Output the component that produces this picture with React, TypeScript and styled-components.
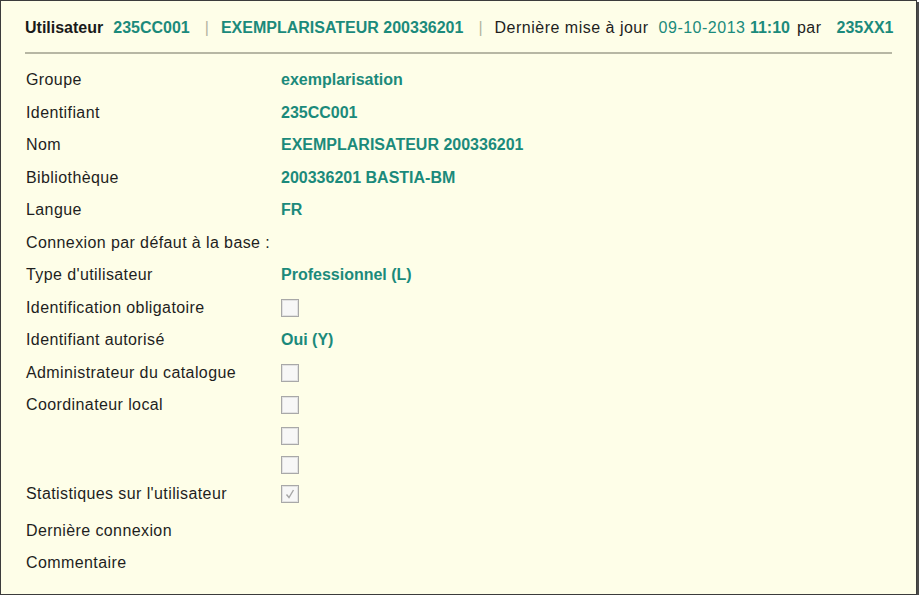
import React from "react";
import styled, { createGlobalStyle } from "styled-components";

const Global = createGlobalStyle`
  html, body { margin: 0; padding: 0; background: #ffffff; }
  body { font-family: "Liberation Sans", Arial, sans-serif; }
`;

const Frame = styled.div`
  box-sizing: border-box;
  width: 917px;
  height: 595px;
  background: #fefee8;
  border: 1px solid #3c3c3c;
  box-shadow: 2px 2px 0 #4a4a4a;
  padding: 0 24px 0 24px;
  color: #1e1e1e;
  font-size: 16px;
`;

const Header = styled.div`
  display: flex;
  align-items: center;
  height: 53px;
  padding-top: 3px;
  box-sizing: border-box;
  border-bottom: 2px solid #b7b7a4;
  white-space: nowrap;
`;

const Strong = styled.span`
  font-weight: bold;
  color: #1a1a1a;
  margin-right: 10px;
`;

const Value = styled.span<{ $gap?: number; $weight?: string }>`
  color: #1b8a7b;
  font-weight: ${(p) => p.$weight ?? "bold"};
  letter-spacing: ${(p) => (p.$weight === "normal" ? "0.5px" : "0")};
  margin-right: ${(p) => p.$gap ?? 0}px;
`;

const Sep = styled.span`
  color: #b4b4a0;
  margin: 0 12px 0 15px;
`;

const Plain = styled.span<{ $gap?: number }>`
  color: #1e1e1e;
  letter-spacing: 0.5px;
  margin-right: ${(p) => p.$gap ?? 10}px;
`;

const List = styled.div`
  display: flex;
  flex-direction: column;
  padding-top: 10px;
  padding-left: 1px;
`;

const Row = styled.div<{ $h?: number; $mt?: number }>`
  display: grid;
  grid-template-columns: 255px 1fr;
  align-items: center;
  height: ${(p) => p.$h ?? 32.5}px;
  margin-top: ${(p) => p.$mt ?? 0}px;
`;

const Label = styled.span`
  color: #1e1e1e;
  letter-spacing: 0.4px;
  white-space: nowrap;
`;

const Field = styled.span`
  color: #1b8a7b;
  font-weight: bold;
`;

const Box = styled.span`
  display: block;
  box-sizing: border-box;
  width: 18px;
  height: 18px;
  border: 1px solid #a8a8a8;
  background: #f7f7f7;
  box-shadow: inset 0 0 0 1px #e2e2e2;
  position: relative;
`;

const Check = styled.svg`
  position: absolute;
  left: 3px;
  top: 3px;
`;

const CheckBox: React.FC<{ checked?: boolean }> = ({ checked }) => (
  <Box>
    {checked && (
      <Check width="10" height="10" viewBox="0 0 10 10">
        <path d="M1.5 5.5 L4 8.5 L8.5 1" fill="none" stroke="#a6a6a6" strokeWidth="1.4" />
      </Check>
    )}
  </Box>
);

export default function App() {
  return (
    <>
      <Global />
      <Frame>
        <Header>
          <Strong>Utilisateur</Strong>
          <Value>235CC001</Value>
          <Sep>|</Sep>
          <Value>EXEMPLARISATEUR 200336201</Value>
          <Sep>|</Sep>
          <Plain>Dernière mise à jour</Plain>
          <Value $weight="normal">09-10-2013</Value>
          <Value $gap={7}>&nbsp;11:10</Value>
          <Plain $gap={15}>par</Plain>
          <Value>235XX1</Value>
        </Header>
        <List>
          <Row><Label>Groupe</Label><Field>exemplarisation</Field></Row>
          <Row><Label>Identifiant</Label><Field>235CC001</Field></Row>
          <Row><Label>Nom</Label><Field>EXEMPLARISATEUR 200336201</Field></Row>
          <Row><Label>Bibliothèque</Label><Field>200336201 BASTIA-BM</Field></Row>
          <Row><Label>Langue</Label><Field>FR</Field></Row>
          <Row><Label>Connexion par défaut à la base :</Label><Field></Field></Row>
          <Row><Label>Type d'utilisateur</Label><Field>Professionnel (L)</Field></Row>
          <Row><Label>Identification obligatoire</Label><CheckBox /></Row>
          <Row><Label>Identifiant autorisé</Label><Field>Oui (Y)</Field></Row>
          <Row><Label>Administrateur du catalogue</Label><CheckBox /></Row>
          <Row><Label>Coordinateur local</Label><CheckBox /></Row>
          <Row $h={29}><Label></Label><CheckBox /></Row>
          <Row $h={29}><Label></Label><CheckBox /></Row>
          <Row $h={29}><Label>Statistiques sur l'utilisateur</Label><CheckBox checked /></Row>
          <Row $mt={6}><Label>Dernière connexion</Label><Field></Field></Row>
          <Row><Label>Commentaire</Label><Field></Field></Row>
        </List>
      </Frame>
    </>
  );
}
